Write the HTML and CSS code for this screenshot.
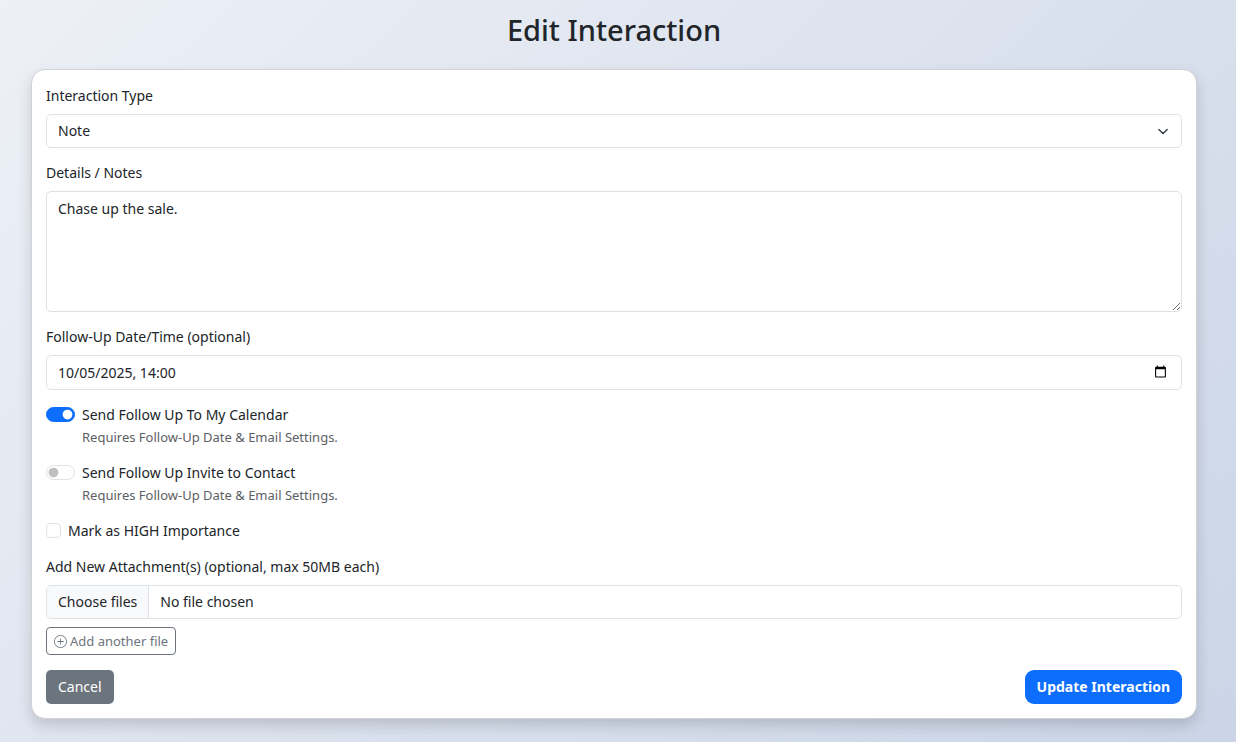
FILE: index.html
```html
<!DOCTYPE html>
<html lang="en-GB">
<head>
<meta charset="utf-8">
<meta name="viewport" content="width=device-width, initial-scale=1">
<title>Edit Interaction</title>
<link rel="stylesheet" href="styles.css">
</head>
<body>
<main class="page">
  <h1 class="page-title">Edit Interaction</h1>
  <form class="card">
    <div class="field">
      <label class="label" for="type">Interaction Type</label>
      <select class="control select" id="type">
        <option selected>Note</option>
        <option>Call</option>
        <option>Email</option>
        <option>Meeting</option>
      </select>
    </div>
    <div class="field">
      <label class="label" for="details">Details / Notes</label>
      <textarea class="control textarea" id="details">Chase up the sale.</textarea>
    </div>
    <div class="field">
      <label class="label" for="followup">Follow-Up Date/Time (optional)</label>
      <div class="control date">
        <input class="date-input" type="text" id="followup" value="10/05/2025, 14:00">
        <button class="date-picker" type="button" aria-label="Show date picker">
          <svg class="date-icon" viewBox="0 0 24 24" fill="#000" aria-hidden="true"><path d="M20 3h-1V1h-2v2H7V1H5v2H4c-1.100 0-2 .9-2 2v16c0 1.100.9 2 2 2h16c1.100 0 2-.9 2-2V5c0-1.100-.9-2-2-2zm0 18H4V8h16v13z"/></svg>
        </button>
      </div>
    </div>
    <div class="check">
      <input class="switch" type="checkbox" role="switch" id="calendar" aria-describedby="calendar-hint" checked>
      <div class="check-text">
        <label for="calendar">Send Follow Up To My Calendar</label>
        <small class="hint" id="calendar-hint">Requires Follow-Up Date &amp; Email Settings.</small>
      </div>
    </div>
    <div class="check">
      <input class="switch" type="checkbox" role="switch" id="invite" aria-describedby="invite-hint">
      <div class="check-text">
        <label for="invite">Send Follow Up Invite to Contact</label>
        <small class="hint" id="invite-hint">Requires Follow-Up Date &amp; Email Settings.</small>
      </div>
    </div>
    <div class="check">
      <input class="box" type="checkbox" id="importance">
      <label for="importance">Mark as HIGH Importance</label>
    </div>
    <div class="field">
      <label class="label" for="files">Add New Attachment(s) (optional, max 50MB each)</label>
      <label class="control file">
        <input class="file-input" type="file" id="files" multiple>
        <span class="file-button">Choose files</span>
        <span class="file-name">No file chosen</span>
      </label>
      <button class="btn btn-outline" type="button">
        <svg class="icon" viewBox="0 0 16 16" fill="currentColor" aria-hidden="true"><path d="M8 15A7 7 0 1 1 8 1a7 7 0 0 1 0 14m0 1A8 8 0 1 0 8 0a8 8 0 0 0 0 16"/><path d="M8 4a.5.5 0 0 1 .5.5v3h3a.5.5 0 0 1 0 1h-3v3a.5.5 0 0 1-1 0v-3h-3a.5.5 0 0 1 0-1h3v-3A.5.5 0 0 1 8 4"/></svg>
        Add another file
      </button>
    </div>
    <div class="actions">
      <a class="btn btn-secondary" href="#">Cancel</a>
      <button class="btn btn-primary" type="submit">Update Interaction</button>
    </div>
  </form>
</main>
</body>
</html>
```
FILE: styles.css
```css
* { box-sizing: border-box; }

body {
  margin: 0;
  min-height: 100vh;
  background: linear-gradient(135deg, #edf0f6, #cbd5e7);
  color: #212529;
  font-family: "Noto Sans", "Liberation Sans", sans-serif;
  font-size: 14px;
  line-height: 22px;
}

.page { padding: 12px 39px 23px 31px; }

.page-title {
  margin: 0 0 21px;
  font-size: 29px;
  font-weight: 500;
  line-height: 36px;
  text-align: center;
}

.card {
  display: flex;
  flex-direction: column;
  gap: 14px;
  padding: 15px 14px 14px;
  border: 1px solid #d0d2d5;
  border-radius: 14px;
  background: #fff;
  box-shadow: 0 7px 14px rgba(0, 0, 0, 0.15);
}

.field {
  display: flex;
  flex-direction: column;
}

.label { margin-bottom: 7px; }

.control {
  width: 100%;
  height: 34px;
  margin: 0;
  padding: 5px 11px;
  border: 1px solid #dee2e6;
  border-radius: 5px;
  background-color: #fff;
  color: #212529;
  font: inherit;
}

.select {
  appearance: none;
  background-image: url("data:image/svg+xml,%3csvg xmlns='http://www.w3.org/2000/svg' viewBox='0 0 16 16'%3e%3cpath fill='none' stroke='%23343a40' stroke-linecap='round' stroke-linejoin='round' stroke-width='2' d='m2 5 6 6 6-6'/%3e%3c/svg%3e");
  background-repeat: no-repeat;
  background-position: right 11px center;
  background-size: 14px 11px;
}

.textarea {
  display: block;
  height: 121px;
  padding-top: 6px;
  resize: vertical;
}

.date {
  display: flex;
  align-items: center;
  height: 35px;
}

.date-input {
  flex: 1;
  min-width: 0;
  padding: 0;
  border: 0;
  outline: 0;
  background: none;
  color: inherit;
  font: inherit;
}

.date-picker {
  display: flex;
  padding: 0 3px 2px;
  border: 0;
  background: none;
  cursor: pointer;
}

.date-icon {
  width: 13px;
  height: 13px;
}

.check {
  display: flex;
  align-items: flex-start;
  gap: 7px;
}

.check-text {
  display: flex;
  flex-direction: column;
}

.hint {
  margin-top: 1px;
  color: #5c6065;
  font-size: 13px;
  line-height: 21px;
}

.switch,
.box {
  flex: none;
  appearance: none;
  height: 15px;
  margin: 3px 0 0;
  border: 1px solid #dee2e6;
  background: #fff no-repeat left center;
}

.box {
  width: 15px;
  border-radius: 4px;
}

.box:checked { background-color: #0d6efd; }

.switch {
  width: 29px;
  border-radius: 8px;
  background-image: url("data:image/svg+xml,%3csvg xmlns='http://www.w3.org/2000/svg' viewBox='-4 -4 8 8'%3e%3ccircle r='3' fill='rgba(0,0,0,.25)'/%3e%3c/svg%3e");
  background-size: contain;
}

.switch:checked {
  border-color: #0d6efd;
  background-color: #0d6efd;
  background-position: right center;
  background-image: url("data:image/svg+xml,%3csvg xmlns='http://www.w3.org/2000/svg' viewBox='-4 -4 8 8'%3e%3ccircle r='3' fill='%23fff'/%3e%3c/svg%3e");
}

.file {
  position: relative;
  display: flex;
  padding: 0;
  overflow: hidden;
}

.file-input {
  position: absolute;
  inset: 0;
  width: 100%;
  opacity: 0;
}

.file-button {
  padding: 5px 11px;
  border-right: 1px solid #dee2e6;
  background: #f8f9fa;
}

.file-name { padding: 5px 11px; }

.btn {
  padding: 5px 11px;
  border: 1px solid transparent;
  border-radius: 5px;
  font: inherit;
  text-decoration: none;
  cursor: pointer;
}

.btn-outline {
  display: flex;
  align-items: center;
  align-self: flex-start;
  gap: 3px;
  margin-top: 8px;
  padding: 3px 7px;
  border-color: #6c757d;
  border-radius: 4px;
  background: #fff;
  color: #6c757d;
  font-size: 13px;
  line-height: 20px;
}

.icon {
  width: 13px;
  height: 13px;
}

.btn-secondary {
  background: #6c757d;
  color: #fff;
}

.btn-primary {
  border-radius: 9px;
  background: #0d6efd;
  color: #fff;
  font-weight: 700;
}

.actions {
  display: flex;
  justify-content: space-between;
  padding-top: 1px;
}
```
